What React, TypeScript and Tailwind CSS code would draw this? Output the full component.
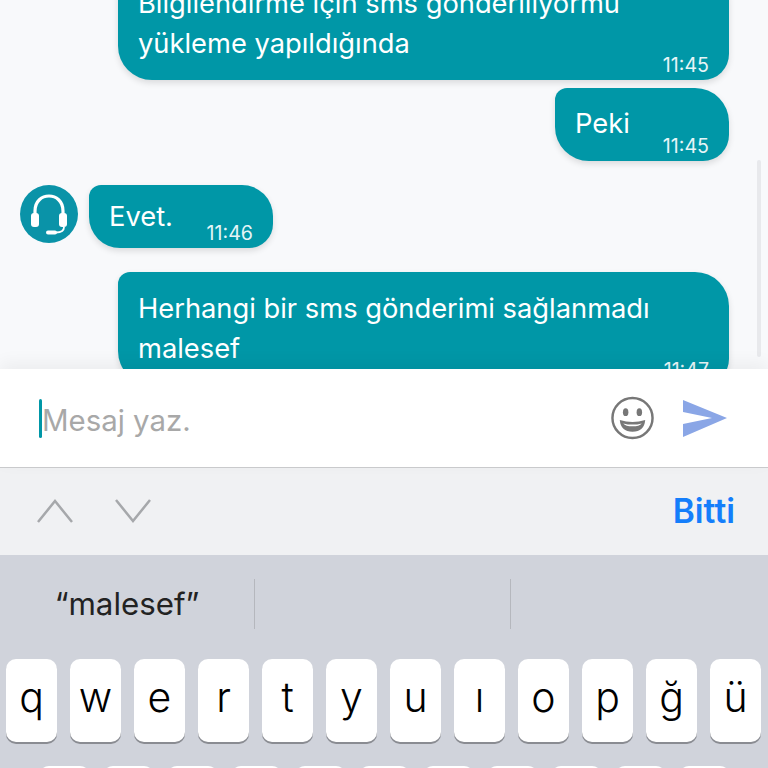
const ui = '"Inter", "Liberation Sans", sans-serif';

function Bubble({ text, time, className }: { text: string[]; time: string; className: string }) {
  return (
    <div className={`relative bg-[#0097a7] text-white shadow-[0_3px_6px_rgba(0,0,0,0.12)] text-[27.3px] leading-[40px] pl-[20px] ${className}`}>
      {text.map((t) => (
        <div key={t}>{t}</div>
      ))}
      <span className="absolute right-[20px] bottom-[4px] text-[19.6px] leading-[22px] text-[#e6f5f7]">{time}</span>
    </div>
  );
}

function Headset() {
  return (
    <div className="w-[58px] h-[58px] shrink-0 rounded-full bg-[#0a93a8] flex items-center justify-center">
      <svg width="58" height="58" viewBox="0 0 58 58">
        <path d="M15 31 V26 C15 6 43 6 43 26 V31" fill="none" stroke="#fff" strokeWidth="3.2" />
        <rect x="11" y="28" width="8" height="14" rx="3" fill="#fff" />
        <rect x="39" y="28" width="8" height="14" rx="3" fill="#fff" />
        <path d="M44 42 C44 46.500 41 47.500 36 47.500 H30" fill="none" stroke="#fff" strokeWidth="1.800" />
        <rect x="26" y="45.500" width="11" height="4" rx="2" fill="#fff" />
      </svg>
    </div>
  );
}

function Smile() {
  return (
    <svg width="45" height="46" viewBox="0 0 46 46">
      <circle cx="23" cy="23" r="20.500" fill="none" stroke="#777" strokeWidth="2.500" />
      <ellipse cx="16" cy="17" rx="2.800" ry="4" fill="#777" />
      <ellipse cx="30" cy="17" rx="2.800" ry="4" fill="#777" />
      <path d="M10 25 Q23 29 36 25 Q35 37 23 37 Q11 37 10 25 Z" fill="#777" />
      <path d="M13.500 28.500 Q23 31 32.500 28.500 Q30 31.500 23 31.500 Q16 31.500 13.500 28.500 Z" fill="#fff" />
    </svg>
  );
}

function Key({ label }: { label: string }) {
  return (
    <div className="w-[51px] h-[83px] shrink-0 bg-white rounded-[10px] shadow-[0_2px_0_#8a8c92] flex items-center justify-center text-[41px] leading-none text-black font-light pb-[6px]">
      {label}
    </div>
  );
}

export default function App() {
  const top = ['q', 'w', 'e', 'r', 't', 'y', 'u', 'ı', 'o', 'p', 'ğ', 'ü'];
  const second = ['a', 's', 'd', 'f', 'g', 'h', 'j', 'k', 'l', 'ş', 'i'];
  return (
    <div className="w-[768px] h-[768px] overflow-hidden flex flex-col bg-[#f8f9fb]" style={{ fontFamily: ui }}>
      <div className="relative h-[369px] shrink-0 overflow-hidden">
        <div className="flex flex-col mt-[-33px] pr-[39px] pl-[20px]">
          <Bubble
            className="self-end w-[611px] h-[113px] pt-[17px] rounded-tl-[12px] rounded-tr-[32px] rounded-bl-[34px] rounded-br-[26px]"
            text={['Bilgilendirme için sms gönderiliyormu', 'yükleme yapıldığında']}
            time="11:45"
          />
          <Bubble
            className="self-end mt-[8px] w-[174px] h-[73px] pl-[19px] pt-[16px] rounded-tl-[12px] rounded-tr-[34px] rounded-bl-[34px] rounded-br-[26px]"
            text={['Peki']}
            time="11:45"
          />
          <div className="flex mt-[24px] gap-[11px] items-start">
            <Headset />
            <Bubble
              className="w-[184px] h-[63px] pt-[12px] rounded-tl-[12px] rounded-tr-[31px] rounded-bl-[31px] rounded-br-[24px]"
              text={['Evet.']}
              time="11:46"
            />
          </div>
          <Bubble
            className="self-end mt-[24px] w-[611px] h-[113px] pt-[17px] shrink-0 rounded-tl-[12px] rounded-tr-[34px] rounded-bl-[34px] rounded-br-[26px]"
            text={['Herhangi bir sms gönderimi sağlanmadı', 'malesef']}
            time="11:47"
          />
        </div>
        <div className="absolute right-[7px] top-[160px] w-[4px] h-[197px] rounded-full bg-[#e8e9ec]" />
      </div>

      <div className="h-[99px] shrink-0 bg-white border-b border-[#c9cacc] shadow-[0_-6px_16px_rgba(0,0,0,0.05)] relative flex items-center pl-[39px] pr-[40px]">
        <div className="w-[3px] h-[39px] bg-[#0097a7] rounded-[2px] shrink-0" />
        <div className="text-[29.4px] text-[#a8a8a8] flex-1 leading-none pt-[5px]">Mesaj yaz.</div>
        <Smile />
        <svg className="ml-[28px] mt-[2px]" width="45" height="40" viewBox="0 0 45 40">
          <polygon points="0,1 44,19 0,38 0,25 29,19 0,13" fill="#8aa6e6" />
        </svg>
      </div>

      <div className="h-[87px] shrink-0 bg-[#f0f1f3] flex items-center pl-[36px] pr-[33px]">
        <svg className="mb-[2px]" width="38" height="26" viewBox="0 0 38 26">
          <path d="M2 24 L19 3 L36 24" fill="none" stroke="#a6a8ab" strokeWidth="2.500" />
        </svg>
        <svg className="ml-[40px] mb-[2px]" width="38" height="26" viewBox="0 0 38 26">
          <path d="M2 2 L19 23 L36 2" fill="none" stroke="#a6a8ab" strokeWidth="2.500" />
        </svg>
        <div className="ml-auto text-[33.5px] leading-none font-semibold text-[#147efb]">Bitti</div>
      </div>

      <div className="flex-1 bg-[#d0d3db] overflow-hidden">
        <div className="h-[104px] flex items-start pt-[24px]">
          <div className="w-[255px] h-[50px] border-r border-[#b5b7bd] flex items-center justify-center text-[31.3px] text-[#222]">
            “malesef”
          </div>
          <div className="w-[256px] h-[50px] border-r border-[#b5b7bd]" />
        </div>
        <div className="flex gap-[13px] pl-[6px]">
          {top.map((k) => (
            <Key key={k} label={k} />
          ))}
        </div>
        <div className="flex gap-[13px] justify-center mt-[24px]">
          {second.map((k) => (
            <Key key={k} label={k} />
          ))}
        </div>
      </div>
    </div>
  );
}
